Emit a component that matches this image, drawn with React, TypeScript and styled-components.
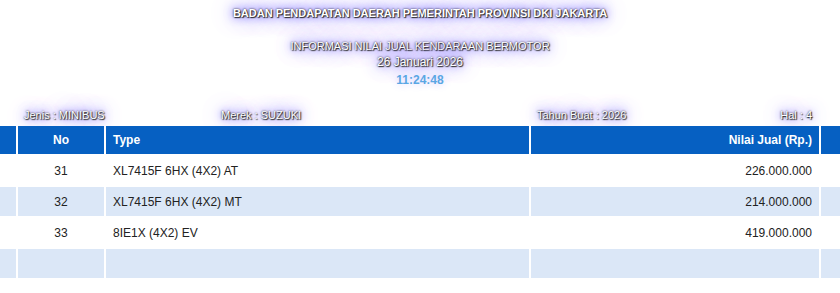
import React from "react";
import styled, { createGlobalStyle } from "styled-components";

const Global = createGlobalStyle`
  html, body { margin: 0; padding: 0; background: #ffffff; }
  body { font-family: "Liberation Sans", Arial, sans-serif; width: 840px; overflow: hidden; }
`;

const Page = styled.div`
  width: 840px;
  display: flex;
  flex-direction: column;
`;

const Heading = styled.div`
  display: flex;
  flex-direction: column;
  align-items: center;
  padding-top: 6px;
`;

const glow = `
  text-shadow: 0 0 2px #111, 1px 1px 1px #333, 0 0 8px #6a5cff, 0 0 18px #8a7fff, 0 0 30px #aaa2ff;
`;

const Title = styled.div`
  font-size: 11px;
  font-weight: bold;
  color: #ffffff;
  line-height: 14px;
  ${glow}
`;

const SubTitle = styled.div<{ $top?: number; $size?: number }>`
  font-size: ${(p) => p.$size ?? 11}px;
  color: #ffffff;
  line-height: 16px;
  margin-top: ${(p) => p.$top ?? 0}px;
  ${glow}
`;

const Clock = styled.div`
  font-size: 12px;
  font-weight: bold;
  color: #5aa7e4;
  line-height: 16px;
  margin-top: 2px;
  text-shadow: 0 0 10px #c8c4ff;
`;

const InfoRow = styled.div`
  display: grid;
  grid-template-columns: 197px 316px 1fr auto;
  padding: 0 28px 0 24px;
  margin-top: 20px;
  font-size: 11px;
  line-height: 14px;
  color: #ffffff;
  ${glow}
`;

const InfoCell = styled.div``;

const Table = styled.div`
  display: grid;
  grid-template-columns: 16px 86px 1fr 288px 19px;
  column-gap: 2px;
  row-gap: 2px;
  margin-top: 4px;
  font-size: 12px;
`;

const Cell = styled.div<{ $head?: boolean; $alt?: boolean; $align?: "left" | "center" | "right" }>`
  height: ${(p) => (p.$head ? 28 : 29)}px;
  display: flex;
  align-items: center;
  padding: 0 7px;
  justify-content: ${(p) =>
    p.$align === "center" ? "center" : p.$align === "right" ? "flex-end" : "flex-start"};
  background: ${(p) => (p.$head ? "#0660c2" : p.$alt ? "#dbe7f7" : "#ffffff")};
  color: ${(p) => (p.$head ? "#ffffff" : "#222222")};
  font-weight: ${(p) => (p.$head ? "bold" : "normal")};
  white-space: nowrap;
`;

const rows = [
  { no: "31", type: "XL7415F 6HX (4X2) AT", price: "226.000.000" },
  { no: "32", type: "XL7415F 6HX (4X2) MT", price: "214.000.000" },
  { no: "33", type: "8IE1X (4X2) EV", price: "419.000.000" },
  { no: "", type: "", price: "" },
];

export default function App() {
  return (
    <Page>
      <Global />
      <Heading>
        <Title>BADAN PENDAPATAN DAERAH PEMERINTAH PROVINSI DKI JAKARTA</Title>
        <SubTitle $top={18}>INFORMASI NILAI JUAL KENDARAAN BERMOTOR</SubTitle>
        <SubTitle $size={12}>26 Januari 2026</SubTitle>
        <Clock>11:24:48</Clock>
      </Heading>
      <InfoRow>
        <InfoCell>Jenis : MINIBUS</InfoCell>
        <InfoCell>Merek : SUZUKI</InfoCell>
        <InfoCell>Tahun Buat : 2026</InfoCell>
        <InfoCell>Hal : 4</InfoCell>
      </InfoRow>
      <Table>
        <Cell $head />
        <Cell $head $align="center">No</Cell>
        <Cell $head>Type</Cell>
        <Cell $head $align="right">Nilai Jual (Rp.)</Cell>
        <Cell $head />
        {rows.map((r, i) => (
          <React.Fragment key={i}>
            <Cell $alt={i % 2 === 1} />
            <Cell $alt={i % 2 === 1} $align="center">{r.no}</Cell>
            <Cell $alt={i % 2 === 1}>{r.type}</Cell>
            <Cell $alt={i % 2 === 1} $align="right">{r.price}</Cell>
            <Cell $alt={i % 2 === 1} />
          </React.Fragment>
        ))}
      </Table>
    </Page>
  );
}
